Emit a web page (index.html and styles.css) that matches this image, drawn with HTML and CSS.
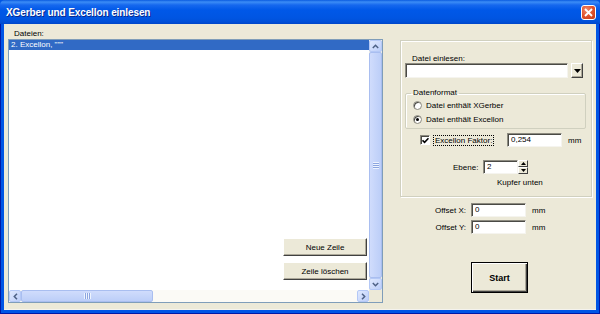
FILE: index.html
```html
<!DOCTYPE html>
<html lang="de">
<head>
  <meta charset="UTF-8" />
  <title>XGerber und Excellon einlesen</title>
  <link rel="stylesheet" href="styles.css">
</head>
<body>
  <div class="window">
    <div class="titlebar">
      <span class="title">XGerber und Excellon einlesen</span>
      <span class="close-btn">
        <svg width="9" height="9" viewBox="0 0 9 9"><path d="M1 1L8 8M8 1L1 8" stroke="#fff" stroke-width="1.8"/></svg>
      </span>
    </div>
    <div class="frame">
      <div class="client">

        <!-- left: file list -->
        <div class="files">
          <div class="caption">Dateien:</div>
          <div class="listbox">
            <div class="list-area">
              <div class="list-item selected">2. Excellon, """</div>
              <div class="list-buttons">
                <div class="btn">Neue Zeile</div>
                <div class="btn">Zeile löschen</div>
              </div>
            </div>
            <div class="vscroll">
              <div class="sb-btn">
                <svg width="7" height="5" viewBox="0 0 7 5"><path d="M0.8 4L3.5 1.3L6.2 4" fill="none" stroke="#4D6185" stroke-width="1.5"/></svg>
              </div>
              <div class="sb-thumb vertical"><span class="grip"></span></div>
              <div class="sb-btn">
                <svg width="7" height="5" viewBox="0 0 7 5"><path d="M0.8 1L3.5 3.7L6.2 1" fill="none" stroke="#4D6185" stroke-width="1.5"/></svg>
              </div>
            </div>
            <div class="hscroll">
              <div class="sb-btn">
                <svg width="5" height="7" viewBox="0 0 5 7"><path d="M4 0.8L1.3 3.5L4 6.2" fill="none" stroke="#4D6185" stroke-width="1.5"/></svg>
              </div>
              <div class="sb-thumb horizontal"><span class="grip"></span></div>
              <div class="sb-track"></div>
              <div class="sb-btn">
                <svg width="5" height="7" viewBox="0 0 5 7"><path d="M1 0.8L3.7 3.5L1 6.2" fill="none" stroke="#4D6185" stroke-width="1.5"/></svg>
              </div>
            </div>
            <div class="corner"></div>
          </div>
        </div>

        <!-- right: settings -->
        <div class="side">
          <div class="panel">
            <div class="panel-label">Datei einlesen:</div>
            <div class="combo-row">
              <div class="field combo"></div>
              <div class="drop-btn">
                <svg width="7" height="4" viewBox="0 0 7 4"><path d="M0 0H7L3.5 4Z" fill="#000"/></svg>
              </div>
            </div>

            <fieldset class="format">
              <legend>Datenformat</legend>
              <div class="radio-row"><span class="radio"></span><span>Datei enthält XGerber</span></div>
              <div class="radio-row"><span class="radio checked"></span><span>Datei enthält Excellon</span></div>
            </fieldset>

            <div class="check-row">
              <span class="checkbox">
                <svg width="7" height="7" viewBox="0 0 7 7"><path d="M0.5 3.3L2.6 5.4L6.5 1.2" fill="none" stroke="#000" stroke-width="1.6"/></svg>
              </span>
              <span class="focus-label">Excellon Faktor:</span>
              <div class="field factor">0,254</div>
              <span class="unit">mm</span>
            </div>

            <div class="layer-row">
              <span class="layer-label">Ebene:</span>
              <div class="field layer">2</div>
              <div class="spinner">
                <span class="spin">
                  <svg width="5" height="3" viewBox="0 0 5 3"><path d="M0 3H5L2.5 0Z" fill="#000"/></svg>
                </span>
                <span class="spin">
                  <svg width="5" height="3" viewBox="0 0 5 3"><path d="M0 0H5L2.5 3Z" fill="#000"/></svg>
                </span>
              </div>
            </div>
            <div class="layer-name">Kupfer unten</div>
          </div>

          <div class="offset-row first">
            <span class="offset-label">Offset X:</span>
            <div class="field offset">0</div>
            <span class="unit">mm</span>
          </div>
          <div class="offset-row">
            <span class="offset-label">Offset Y:</span>
            <div class="field offset">0</div>
            <span class="unit">mm</span>
          </div>

          <div class="start-btn">Start</div>
        </div>

      </div>
    </div>
  </div>
</body>
</html>
```

FILE: styles.css
```css
:root {
  --face: #ECE9D8;
  --xp-blue: #0055E5;
  --xp-dark: #0019A8;
  --list-border: #7F9DB9;
  --select: #316AC5;
  --scroll-face: #C4D3FA;
  --scroll-edge: #A9BEF0;
  --font-stack: "Liberation Sans", Arial, sans-serif;
}

body {
  margin: 0;
  font-family: var(--font-stack);
  font-size: 8px;
  color: #000;
  background: #fff;
}

.window {
  width: 600px;
  height: 314px;
  display: flex;
  flex-direction: column;
  background: var(--xp-blue);
}

/* title bar */
.titlebar {
  height: 24px;
  flex: none;
  display: flex;
  align-items: center;
  justify-content: space-between;
  padding: 0 4px 0 6px;
  box-sizing: border-box;
  background: linear-gradient(to bottom, #0A5BE0 0, #3C8DF6 2px, #1668EE 5px, #0058E8 10px, #0055E2 18px, #004FD8 22px, #0046C8 24px);
  border-radius: 5px 5px 0 0;
}

.title {
  color: #fff;
  font-weight: 700;
  font-size: 10px;
  letter-spacing: -0.1px;
  text-shadow: 1px 1px 0 #0A2A8C;
}

.close-btn {
  width: 15px;
  height: 15px;
  box-sizing: border-box;
  border: 1px solid #fff;
  border-radius: 3px;
  background: radial-gradient(circle at 35% 30%, #F08A6A 0, #E0532D 50%, #C53A16 100%);
  display: flex;
  justify-content: center;
  align-items: center;
}

.frame {
  flex: 1;
  padding: 0 4px 4px;
  box-shadow: inset 1px 0 0 var(--xp-dark), inset -1px 0 0 var(--xp-dark), inset 0 -1px 0 var(--xp-dark);
  display: flex;
}

.client {
  flex: 1;
  background: var(--face);
  display: flex;
  gap: 17px;
  padding: 5px 4px 0 4px;
  box-shadow: inset 0 -1px 0 #F4F3EE;
}

/* file list */
.files {
  width: 375px;
  display: flex;
  flex-direction: column;
}

.caption {
  margin-left: 6px;
  line-height: 10px;
  height: 10px;
}

.listbox {
  width: 375px;
  height: 264px;
  box-sizing: border-box;
  border: 1px solid var(--list-border);
  background: #fff;
  display: grid;
  grid-template-columns: 1fr 13px;
  grid-template-rows: 1fr 12px;
}

.list-area {
  position: relative;
}

.list-item {
  height: 10px;
  line-height: 10px;
  padding-left: 2px;
}

.list-item.selected {
  background: var(--select);
  color: #fff;
}

.list-buttons {
  position: absolute;
  right: 2px;
  bottom: 10px;
  display: flex;
  flex-direction: column;
  gap: 6px;
}

.btn {
  width: 84px;
  height: 18px;
  box-sizing: border-box;
  display: flex;
  justify-content: center;
  align-items: center;
  background: var(--face);
  border: 1px solid;
  border-color: #fff #404040 #404040 #fff;
  box-shadow: inset -1px -1px 0 #ACA899;
}

/* scrollbars */
.vscroll {
  display: flex;
  flex-direction: column;
  background: #EEEDE5;
}

.hscroll {
  display: flex;
  background: #FBFAF6;
}

.sb-btn {
  flex: none;
  width: 13px;
  height: 12px;
  box-sizing: border-box;
  border: 1px solid #B4C8F6;
  border-radius: 2px;
  background: linear-gradient(135deg, #E0E9FE, #BCCEF9);
  display: flex;
  justify-content: center;
  align-items: center;
}

.hscroll .sb-btn {
  width: 12px;
}

.sb-thumb {
  box-sizing: border-box;
  border: 1px solid var(--scroll-edge);
  border-radius: 2px;
  background: var(--scroll-face);
  display: flex;
  justify-content: center;
  align-items: center;
}

.sb-thumb.vertical {
  flex: 1;
  background: linear-gradient(to right, #D0DCFC, #BCCEF8);
}

.sb-thumb.horizontal {
  width: 132px;
  flex: none;
  background: linear-gradient(to bottom, #D0DCFC, #BCCEF8);
}

.grip {
  width: 6px;
  height: 7px;
  background: repeating-linear-gradient(to bottom, #EEF4FE 0, #EEF4FE 1px, #8CA5E0 1px, #8CA5E0 2px);
}

.sb-thumb.horizontal .grip {
  width: 7px;
  height: 6px;
  background: repeating-linear-gradient(to right, #EEF4FE 0, #EEF4FE 1px, #8CA5E0 1px, #8CA5E0 2px);
}

.sb-track {
  flex: 1;
}

.corner {
  background: var(--face);
}

/* right side */
.side {
  width: 192px;
  margin-top: 11px;
  display: flex;
  flex-direction: column;
}

.panel {
  height: 157px;
  box-sizing: border-box;
  border: 1px solid #D0D0BF;
  box-shadow: inset 1px 1px 0 #fff, 1px 1px 0 #fff;
  padding: 13px 0 0 4px;
}

.panel-label {
  margin-left: 7px;
  line-height: 9px;
}

.field {
  background: #fff;
  box-sizing: border-box;
  border: 1px solid;
  border-color: #8D8B80 #F5F4EF #F5F4EF #8D8B80;
  box-shadow: inset 1px 1px 0 #4A4A45;
  padding-left: 3px;
  line-height: 12px;
}

.combo-row {
  display: flex;
  height: 15px;
}

.combo {
  width: 163px;
  height: 15px;
}

.drop-btn {
  width: 12px;
  height: 15px;
  margin-left: 3px;
  box-sizing: border-box;
  background: var(--face);
  border: 1px solid;
  border-color: #fff #404040 #404040 #fff;
  box-shadow: inset -1px -1px 0 #ACA899;
  display: flex;
  justify-content: center;
  align-items: center;
}

.format {
  width: 181px;
  box-sizing: border-box;
  margin: 10px 0 0 0;
  padding: 0 0 2px 5px;
  border: 1px solid #D0D0BF;
  border-radius: 2px;
  box-shadow: inset 1px 1px 0 #fff;
}

.format legend {
  padding: 0 2px;
  line-height: 10px;
}

.radio-row {
  display: flex;
  align-items: center;
  height: 14px;
  margin-left: 2px;
  gap: 4px;
}

.radio {
  width: 9px;
  height: 9px;
  box-sizing: border-box;
  border-radius: 50%;
  border: 1px solid #8D8B80;
  background: #fff;
  box-shadow: inset 1px 1px 0 #4A4A45;
  display: flex;
  justify-content: center;
  align-items: center;
}

.radio.checked::after {
  content: "";
  width: 3px;
  height: 3px;
  border-radius: 50%;
  background: #000;
}

.check-row {
  display: flex;
  align-items: center;
  height: 14px;
  margin-top: 4px;
}

.checkbox {
  width: 10px;
  height: 10px;
  margin-left: 15px;
  box-sizing: border-box;
  border: 1px solid;
  border-color: #8D8B80 #fff #fff #8D8B80;
  box-shadow: inset 1px 1px 0 #4A4A45;
  background: #fff;
  display: flex;
  justify-content: center;
  align-items: center;
}

.focus-label {
  width: 61px;
  height: 11px;
  line-height: 9px;
  box-sizing: border-box;
  margin-left: 3px;
  padding-left: 1px;
  border: 1px dotted #000;
  white-space: nowrap;
}

.factor {
  width: 55px;
  height: 14px;
  margin-left: 13px;
}

.unit {
  margin-left: 6px;
}

.layer-row {
  display: flex;
  align-items: center;
  margin-top: 13px;
  height: 14px;
}

.layer-label {
  margin-left: 48px;
  width: 30px;
}

.layer {
  width: 35px;
  height: 14px;
}

.spinner {
  width: 10px;
  height: 14px;
  display: flex;
  flex-direction: column;
}

.spin {
  flex: 1;
  box-sizing: border-box;
  background: var(--face);
  border: 1px solid;
  border-color: #fff #404040 #404040 #fff;
  display: flex;
  justify-content: center;
  align-items: center;
}

.layer-name {
  margin: 4px 0 0 92px;
  line-height: 10px;
}

.offset-row {
  display: flex;
  align-items: center;
  height: 14px;
  margin-top: 3px;
}

.offset-row.first {
  margin-top: 6px;
}

.offset-label {
  width: 66px;
  text-align: right;
}

.offset {
  width: 55px;
  height: 14px;
  margin-left: 5px;
}

.start-btn {
  width: 57px;
  height: 31px;
  margin: 28px 0 0 71px;
  box-sizing: border-box;
  border: 1px solid #000;
  background: var(--face);
  box-shadow: inset 1px 1px 0 #fff, inset -1px -1px 0 #404040, inset -2px -2px 0 #ACA899;
  display: flex;
  justify-content: center;
  align-items: center;
  font-weight: 700;
  font-size: 9px;
}
```
